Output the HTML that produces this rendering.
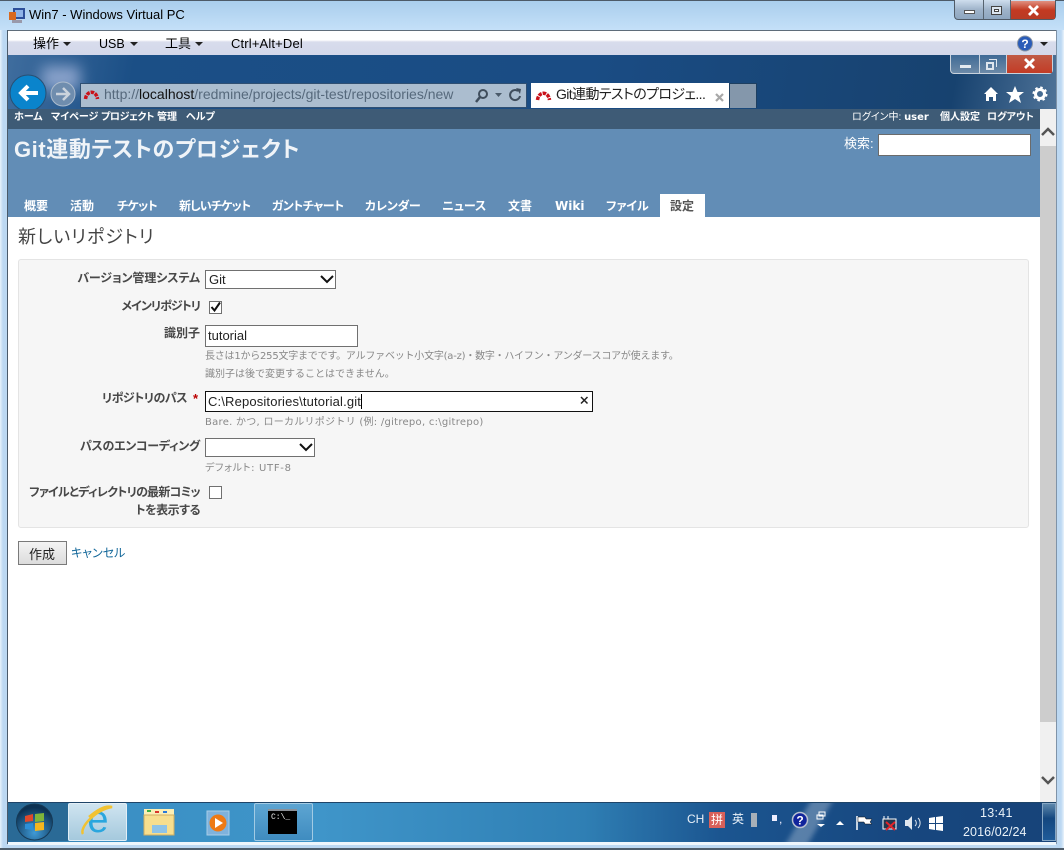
<!DOCTYPE html>
<html lang="ja"><head><meta charset="utf-8"><title>Win7 - Windows Virtual PC</title>
<style>
html,body{margin:0;padding:0}
body{width:1064px;height:850px;position:relative;overflow:hidden;background:#bcd9f2;font-family:"Liberation Sans","Noto Sans CJK JP",sans-serif;color:#000}
.a{position:absolute}
.t{position:absolute;white-space:nowrap;line-height:14px}
.p{font-feature-settings:"palt"}
.b{font-weight:bold}
.m{font-size:10px;color:#fff;font-weight:bold;top:111px;font-feature-settings:"palt"}
.tab{font-size:12px;color:#fff;font-weight:bold;top:199px;font-feature-settings:"palt"}
.lb{font-size:12px;color:#484848;font-weight:bold;text-align:right;right:864px;font-feature-settings:"palt"}
.h{font-size:10px;color:#888;font-family:"DejaVu Sans","Noto Sans CJK JP",sans-serif}
.inp{position:absolute;background:#fff;border:1px solid #707070;box-sizing:border-box;font-size:13px;color:#222;line-height:18px;padding-left:3px;white-space:nowrap}
</style></head><body>
<div class="a" style="left:0;top:0;width:1064px;height:850px;background:linear-gradient(90deg,#e8f2fb 0,#bcd8f2 3px,#bcd8f2 1061px,#e8f2fb 1064px)"></div>
<div class="a" style="left:0;top:0;width:1064px;height:30px;background:linear-gradient(180deg,#a9cdec,#c4e0f8)"></div>
<div class="a" style="left:0;top:0;width:1064px;height:1px;background:#4d5a68"></div>
<div class="a" style="left:7px;top:30px;width:1px;height:814px;background:#4a5a6a"></div>
<div class="a" style="left:1056px;top:30px;width:1px;height:814px;background:#7f93a8"></div>
<svg class="a" style="left:8px;top:6px" width="18" height="18" viewBox="0 0 18 18"><rect x="5" y="2" width="12" height="11" fill="#2d4f9a"/><rect x="7" y="4" width="8" height="7" fill="#8fb4e8"/><rect x="1" y="6" width="7" height="8" fill="#d9691f"/><rect x="4" y="14" width="10" height="3" fill="#99a"/></svg>
<div class="t" style="left:29px;top:8px;font-size:13px">Win7 - Windows Virtual PC</div>

<div class="a" style="left:954px;top:0;width:102px;height:20px;border:1px solid #4f5a66;border-top:0;border-radius:0 0 4px 4px;box-sizing:border-box;background:linear-gradient(180deg,#cfdeee,#9fb4ca 50%,#8ea6bf)"></div>
<div class="a" style="left:1010px;top:1px;width:45px;height:18px;background:linear-gradient(180deg,#e09080,#c33a22 50%,#b83b24)"></div>
<div class="a" style="left:983px;top:0;width:1px;height:19px;background:#56636f"></div>
<div class="a" style="left:1010px;top:0;width:1px;height:19px;background:#56636f"></div>
<div class="a" style="left:964px;top:10px;width:11px;height:4px;background:#fff;border:1px solid #555;box-sizing:border-box"></div>
<div class="a" style="left:991px;top:6px;width:11px;height:9px;border:1px solid #444;box-sizing:border-box;background:#dce6f0"></div>
<div class="a" style="left:994px;top:9px;width:5px;height:3px;border:1px solid #444;box-sizing:border-box;background:#fff"></div>
<svg class="a" style="left:1027px;top:5px" width="13" height="11"><path d="M2 1l9 9M11 1l-9 9" stroke="#fff" stroke-width="2.800"/></svg>

<div class="a" style="left:8px;top:30px;width:1048px;height:25px;background:linear-gradient(180deg,#fff 0,#fff 9px,#d8dcec 11px,#d3d8ea 24px,#8f98a6 25px);border-top:1px solid #5f6d7a;box-sizing:border-box"></div>
<div class="t" style="left:33px;top:37px;font-size:13px">操作</div><div class="a" style="left:63px;top:42px;border:4px solid transparent;border-top:4px solid #222"></div>
<div class="t" style="left:99px;top:37px;font-size:12.500px">USB</div><div class="a" style="left:130px;top:42px;border:4px solid transparent;border-top:4px solid #222"></div>
<div class="t" style="left:165px;top:37px;font-size:13px">工具</div><div class="a" style="left:195px;top:42px;border:4px solid transparent;border-top:4px solid #222"></div>
<div class="t" style="left:231px;top:37px;font-size:13px;letter-spacing:.15px">Ctrl+Alt+Del</div>
<svg class="a" style="left:1016px;top:35px" width="18" height="18"><circle cx="9" cy="8.500" r="7.500" fill="#2a5cb8" stroke="#8a94a2"/><text x="9" y="13" font-size="12" font-weight="bold" fill="#fff" text-anchor="middle" font-family="Liberation Sans">?</text></svg>
<div class="a" style="left:1040px;top:42px;border:4px solid transparent;border-top:4px solid #222"></div>

<div class="a" style="left:8px;top:55px;width:1048px;height:54px;background:linear-gradient(100deg,#3f6d9e 0,#1b4f86 12%,#1a4c84 55%,#17426f 90%,#4f7398 100%)"></div>
<div class="a" style="left:42px;top:66px;width:38px;height:24px;background:#9fb2d8;filter:blur(7px);opacity:.8"></div>
<div class="a" style="left:950px;top:55px;width:103px;height:19px;border:1px solid #c8d2dc;border-top:0;border-radius:0 0 4px 4px;box-sizing:border-box;background:linear-gradient(180deg,#3f6a95,#6d8aa8)"></div>
<div class="a" style="left:1006px;top:55px;width:46px;height:18px;background:linear-gradient(180deg,#c05a45,#c23c26)"></div>
<div class="a" style="left:979px;top:55px;width:1px;height:18px;background:#c8d2dc"></div>
<div class="a" style="left:1006px;top:55px;width:1px;height:18px;background:#c8d2dc"></div>
<div class="a" style="left:960px;top:65px;width:11px;height:3px;background:#e4eaf0"></div>
<div class="a" style="left:986px;top:62px;width:8px;height:8px;border:2px solid #dfe6ee;box-sizing:border-box"></div>
<div class="a" style="left:989px;top:59px;width:8px;height:8px;border:1px solid #dfe6ee;border-left:0;border-bottom:0;box-sizing:border-box"></div>
<svg class="a" style="left:1023px;top:58px" width="13" height="11"><path d="M2 1l9 9M11 1l-9 9" stroke="#fff" stroke-width="2.800"/></svg>

<svg class="a" style="left:9px;top:73px" width="68" height="37" viewBox="0 0 68 37"><circle cx="19" cy="20" r="18" fill="#0a84cc" stroke="#284f73"/><path d="M29 20H12M19 13l-7 7 7 7" fill="none" stroke="#fff" stroke-width="4"/><circle cx="54" cy="21" r="12" fill="#6f8dae" stroke="#adbccd" stroke-width="1"/><path d="M47 21h12M54 15l6 6-6 6" fill="none" stroke="#cbd3dc" stroke-width="2.500"/></svg>
<div class="a" style="left:80px;top:83px;width:447px;height:25px;background:#abbdcf;border:1px solid #2f4f72;box-sizing:border-box"></div>
<svg class="a" style="left:83px;top:88px" width="18" height="13"><path d="M2.500 11C3.500 2 13.500 2 14.500 11" fill="none" stroke="#c9121a" stroke-width="3.500" stroke-dasharray="3.500 1"/></svg>
<div class="t" style="left:104px;top:87px;font-size:14px;color:#56697c">http://<span style="color:#111">localhost</span>/redmine/projects/git-test/repositories/new</div>
<svg class="a" style="left:474px;top:87px" width="50" height="17"><circle cx="9" cy="7" r="4" fill="none" stroke="#3f4d5c" stroke-width="2"/><path d="M6 10l-4 5" stroke="#3f4d5c" stroke-width="2.500"/><path d="M21 6h7l-3.500 4z" fill="#4a5a6a"/><path d="M44 4a5 5 0 1 0 2 5" fill="none" stroke="#3f4d5c" stroke-width="2"/><path d="M42 1l5 1-1 5z" fill="#3f4d5c"/></svg>

<div class="a" style="left:531px;top:83px;width:198px;height:25px;background:#fff"></div>
<div class="a" style="left:729px;top:83px;width:1px;height:25px;background:#1e3f60"></div>
<div class="a" style="left:730px;top:83px;width:26px;height:25px;background:#8497ab;border-top:1px solid #1e3f60;box-sizing:border-box"></div>
<div class="a" style="left:756px;top:83px;width:1px;height:25px;background:#1e3f60"></div>
<svg class="a" style="left:535px;top:89px" width="18" height="13"><path d="M2.500 11C3.500 2 13.500 2 14.500 11" fill="none" stroke="#c9121a" stroke-width="3.500" stroke-dasharray="3.500 1"/></svg>
<div class="t p" style="left:556px;top:87px;font-size:14px;color:#222;letter-spacing:-.6px">Git連動テストのプロジェ...</div>
<svg class="a" style="left:714px;top:92px" width="11" height="11"><path d="M2 2l7 7M9 2L2 9" stroke="#a8a8a8" stroke-width="2.200"/></svg>
<svg class="a" style="left:982px;top:85px" width="66" height="20"><path d="M2 9L9 2l7 7h-2v7h-3v-4H7v4H4V9z" fill="#fff"/><path d="M33 1l2.500 6H42l-5 4 2 7-6-4-6 4 2-7-5-4h6.500z" fill="#fff"/><circle cx="58" cy="9" r="4.500" fill="none" stroke="#fff" stroke-width="3"/><circle cx="58" cy="9" r="6.500" fill="none" stroke="#fff" stroke-width="2" stroke-dasharray="2.500 2.600"/></svg>

<div class="a" style="left:8px;top:109px;width:1048px;height:693px;background:#fff"></div>
<div class="a" style="left:8px;top:109px;width:1032px;height:20px;background:#3e5b76"></div>
<div class="a" style="left:8px;top:129px;width:1032px;height:88px;background:#628db6"></div>
<div class="t m" style="left:14px">ホーム</div>
<div class="t m" style="left:51px">マイページ</div>
<div class="t m" style="left:101px;letter-spacing:-.4px">プロジェクト</div>
<div class="t m" style="left:157px">管理</div>
<div class="t m" style="left:186px">ヘルプ</div>
<div class="t p" style="left:852px;top:111px;font-size:10px;color:#fff">ログイン中: <b style="font-family:'DejaVu Sans',sans-serif">user</b></div>
<div class="t m" style="left:940px">個人設定</div>
<div class="t m" style="left:987px">ログアウト</div>
<div class="t b p" style="left:14px;top:136px;font-size:22px;line-height:28px;color:#f0f4f8;letter-spacing:.57px">Git連動テストのプロジェクト</div>
<div class="t" style="left:844px;top:137px;font-size:13px;color:#fff">検索:</div>
<div class="a" style="left:878px;top:134px;width:153px;height:22px;background:#fff;border:1px solid #6b6b6b;box-sizing:border-box"></div>

<div class="t tab" style="left:24px">概要</div>
<div class="t tab" style="left:70px">活動</div>
<div class="t tab" style="left:117px;letter-spacing:-.7px">チケット</div>
<div class="t tab" style="left:179px;letter-spacing:-.85px">新しいチケット</div>
<div class="t tab" style="left:272px;letter-spacing:-.55px">ガントチャート</div>
<div class="t tab" style="left:365px;letter-spacing:-.2px">カレンダー</div>
<div class="t tab" style="left:442px">ニュース</div>
<div class="t tab" style="left:508px">文書</div>
<div class="t tab" style="left:555px;font-family:'DejaVu Sans',sans-serif">Wiki</div>
<div class="t tab" style="left:606px">ファイル</div>
<div class="a" style="left:660px;top:194px;width:45px;height:23px;background:#fff"></div>
<div class="t tab" style="left:670px;color:#555">設定</div>

<div class="t p" style="left:18px;top:226px;font-size:18px;line-height:22px;color:#444;letter-spacing:1px">新しいリポジトリ</div>
<div class="a" style="left:18px;top:259px;width:1011px;height:269px;background:#f6f6f6;border:1px solid #e4e4e4;border-radius:3px;box-sizing:border-box"></div>

<div class="t lb" style="top:271px;letter-spacing:-.1px">バージョン管理システム</div>
<div class="inp" style="left:205px;top:270px;width:131px;height:19px">Git</div>
<svg class="a" style="left:320px;top:275px" width="14" height="9"><path d="M1 1l6 6 6-6" fill="none" stroke="#111" stroke-width="2"/></svg>

<div class="t lb" style="top:299px;letter-spacing:-1px">メインリポジトリ</div>
<div class="a" style="left:209px;top:301px;width:13px;height:13px;background:#fff;border:1px solid #707070;box-sizing:border-box"></div>
<svg class="a" style="left:209px;top:300px" width="14" height="14"><path d="M2.500 7l3 3.500 5.500-8" fill="none" stroke="#111" stroke-width="2"/></svg>

<div class="t lb" style="top:326px">識別子</div>
<div class="inp" style="left:205px;top:325px;width:153px;height:22px;line-height:20px;padding-left:2px">tutorial</div>
<div class="t h" style="left:205px;top:350px;letter-spacing:-.22px">長さは1から255文字までです。アルファベット小文字(a-z)・数字・ハイフン・アンダースコアが使えます。</div>
<div class="t h" style="left:205px;top:368px">識別子は後で変更することはできません。</div>

<div class="t lb" style="top:391px;right:877px;letter-spacing:-.5px">リポジトリのパス</div>
<div class="t b" style="left:193px;top:392px;font-size:13px;color:#bb0000">*</div>
<div class="inp" style="left:205px;top:391px;width:388px;height:21px;border-color:#111;line-height:19px;padding-left:2px;letter-spacing:.15px">C:\Repositories\tutorial.git<span style="display:inline-block;width:1px;height:15px;background:#000;vertical-align:-3px"></span></div>
<svg class="a" style="left:579px;top:395px" width="11" height="11"><path d="M2 2l6.500 6.500M8.500 2L2 8.500" stroke="#222" stroke-width="1.500"/></svg>
<div class="t h" style="left:205px;top:416px;letter-spacing:.27px">Bare. かつ, ローカルリポジトリ (例: /gitrepo, c:\gitrepo)</div>

<div class="t lb" style="top:439px;letter-spacing:-.3px">パスのエンコーディング</div>
<div class="inp" style="left:205px;top:438px;width:110px;height:19px"></div>
<svg class="a" style="left:299px;top:443px" width="14" height="9"><path d="M1 1l6 6 6-6" fill="none" stroke="#111" stroke-width="2"/></svg>
<div class="t h p" style="left:205px;top:462px;letter-spacing:.7px">デフォルト: UTF-8</div>

<div class="t lb" style="top:485px;letter-spacing:-.75px">ファイルとディレクトリの最新コミッ</div>
<div class="t lb" style="top:503px;letter-spacing:-.5px">トを表示する</div>
<div class="a" style="left:209px;top:486px;width:13px;height:13px;background:#fff;border:1px solid #707070;box-sizing:border-box"></div>

<div class="a" style="left:18px;top:541px;width:49px;height:24px;background:linear-gradient(180deg,#f4f4f4,#dcdcdc);border:1px solid #7a7a7a;box-sizing:border-box"></div>
<div class="t" style="left:29px;top:548px;font-size:13px;color:#222">作成</div>
<div class="t p" style="left:71px;top:546px;font-size:12px;color:#169">キャンセル</div>

<div class="a" style="left:1040px;top:109px;width:16px;height:693px;background:#f0f0f0"></div>
<div class="a" style="left:1040px;top:146px;width:16px;height:576px;background:#cdcdcd"></div>
<svg class="a" style="left:1040px;top:125px" width="16" height="14"><path d="M2 10l6-6 6 6" fill="none" stroke="#555" stroke-width="2.500"/></svg>
<svg class="a" style="left:1040px;top:774px" width="16" height="14"><path d="M2 3l6 6 6-6" fill="none" stroke="#555" stroke-width="2.500"/></svg>

<div class="a" style="left:8px;top:802px;width:1048px;height:40px;background:linear-gradient(90deg,#25699c 0,#3a8fc4 8%,#3f95c9 30%,#2f7fb4 55%,#1b5590 68%,#17477f 85%,#174379 100%);border-top:1px solid #1e4468;box-sizing:border-box;overflow:hidden"><div class="a" style="left:790px;top:-5px;width:22px;height:50px;background:rgba(255,255,255,.28);transform:skewX(-30deg);filter:blur(3px)"></div></div>
<div class="a" style="left:8px;top:803px;width:60px;height:38px;background:#2a6a96"></div>
<svg class="a" style="left:15px;top:803px" width="39" height="38" viewBox="0 0 39 38"><defs><radialGradient id="o" cx=".5" cy=".8" r=".7"><stop offset="0" stop-color="#3f9ad6"/><stop offset="1" stop-color="#0c3152"/></radialGradient></defs><circle cx="19.500" cy="19" r="18" fill="url(#o)" stroke="#173a56"/><path d="M10 13l8-2v7l-8 1z" fill="#e0492b"/><path d="M20 11l9-1v8l-9 1z" fill="#7fb53a"/><path d="M10 21l8-1v7l-8-1z" fill="#2c8fd8"/><path d="M20 20l9-1v8l-9 1z" fill="#f4b61f"/></svg>
<div class="a" style="left:68px;top:803px;width:59px;height:38px;background:linear-gradient(180deg,#cfe4f0,#a5c9dd);border:1px solid #e2eef6;border-radius:2px;box-sizing:border-box"></div>
<svg class="a" style="left:79px;top:804px" width="36" height="34" viewBox="0 0 36 34"><text x="19" y="28" font-family="Liberation Sans" font-size="38" fill="#2aa6de" text-anchor="middle">e</text><path d="M4 30C0 24 16 6 33 3 26 1 18 6 10 13" fill="none" stroke="#f1c232" stroke-width="2.500"/></svg>
<svg class="a" style="left:143px;top:807px" width="34" height="32" viewBox="0 0 34 32"><rect x="1" y="2" width="30" height="8" fill="#fbeeb5"/><rect x="4" y="3" width="4" height="2" fill="#3cb043"/><rect x="12" y="4" width="4" height="2" fill="#d9352a"/><rect x="20" y="4" width="4" height="2" fill="#2a78d9"/><rect x="1" y="8" width="30" height="20" fill="#f7de8e" stroke="#cfae62"/><rect x="9" y="18" width="15" height="8" fill="#8ec3e8"/></svg>
<svg class="a" style="left:206px;top:809px" width="30" height="28" viewBox="0 0 30 28"><rect x="1" y="2" width="22" height="24" fill="#7fb2dc" stroke="#a8cde8"/><circle cx="12" cy="14" r="8.500" fill="#ee7a15"/><path d="M9 9l8 5-8 5z" fill="#fff"/></svg>
<div class="a" style="left:254px;top:803px;width:59px;height:38px;background:linear-gradient(180deg,#5da5d2,#3f8cc0);border:1px solid #a2cbe4;border-radius:2px;box-sizing:border-box"></div>
<div class="a" style="left:268px;top:809px;width:29px;height:25px;background:#000;border-top:2px solid #8a8f96;box-sizing:border-box"></div>
<div class="t" style="left:271px;top:813px;font-size:8px;line-height:10px;color:#eee;font-family:'Liberation Mono',monospace">C:\_</div>

<div class="t" style="left:687px;top:812px;font-size:12px;color:#e8f0f8">CH</div>
<div class="a" style="left:709px;top:812px;width:16px;height:16px;background:#d8605a"></div>
<div class="t" style="left:711px;top:813px;font-size:12px;color:#fff">拼</div>
<div class="t" style="left:732px;top:812px;font-size:12px;color:#e8f0f8">英</div>
<div class="a" style="left:751px;top:813px;width:6px;height:14px;background:#a8b0b8"></div>
<div class="a" style="left:772px;top:815px;width:5px;height:6px;background:#eef"></div>
<div class="t" style="left:779px;top:812px;font-size:12px;color:#eef">,</div>
<svg class="a" style="left:791px;top:811px" width="18" height="18"><circle cx="9" cy="9" r="7.500" fill="#11249c" stroke="#b8c0d0" stroke-width="1.500"/><text x="9" y="13.500" font-size="12" font-weight="bold" fill="#fff" text-anchor="middle" font-family="Liberation Sans">?</text></svg>
<svg class="a" style="left:815px;top:810px" width="32" height="22"><rect x="4" y="2" width="6" height="4" fill="none" stroke="#fff"/><rect x="2" y="5" width="6" height="4" fill="none" stroke="#fff"/><path d="M2 14h8l-4 3z" fill="#fff"/><path d="M21 15h8l-4-4z" fill="#fff"/></svg>
<svg class="a" style="left:855px;top:814px" width="90" height="20"><path d="M2 2v14" stroke="#fff" stroke-width="1.500"/><path d="M3 3h7l1 2h6l-2 3 2 2h-7l-1-2H3z" fill="#fff" stroke="#111" stroke-width=".500"/><rect x="28" y="5" width="13" height="10" fill="#22364e" stroke="#fff"/><path d="M29 2v3M33 2v3" stroke="#fff"/><path d="M31 8l9 8M40 8l-9 8" stroke="#e3242b" stroke-width="2"/><path d="M50 6h3l4-4v14l-4-4h-3z" fill="#dfe6ee"/><path d="M60 6a4 4 0 0 1 0 6M63 4a7 7 0 0 1 0 10" fill="none" stroke="#dfe6ee"/><path d="M74 4l6-1v6h-6zM81 3l7-1v7h-7zM74 10h6v6l-6-1zM81 10h7v7l-7-1z" fill="#fff"/></svg>
<div class="t" style="left:980px;top:806px;font-size:12.500px;color:#eaf2f8;letter-spacing:.3px">13:41</div>
<div class="t" style="left:963px;top:825px;font-size:12.500px;color:#eaf2f8;letter-spacing:.1px">2016/02/24</div>
<div class="a" style="left:1042px;top:803px;width:14px;height:38px;background:linear-gradient(180deg,#5d87ab,#14477f 40%,#1f5b99);border:1px solid #85a6c4;box-sizing:border-box"></div>
<div class="a" style="left:8px;top:842px;width:1048px;height:3px;background:#eef6fc"></div>
<div class="a" style="left:0;top:848px;width:1064px;height:2px;background:#4e5d6b"></div>
</body></html>
